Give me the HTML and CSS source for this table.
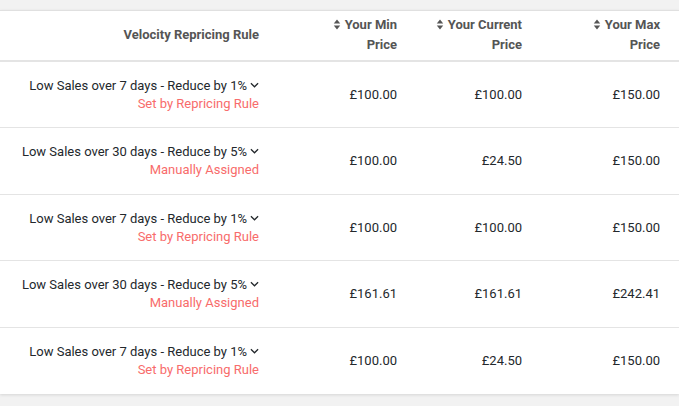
FILE: index.html
```html
<!DOCTYPE html>
<html>
<head>
<meta charset="utf-8">
<link rel="stylesheet" href="styles.css">
</head>
<body>
<div class="page">
  <div class="card">
    <table class="grid">
      <colgroup>
        <col class="c-rule"><col class="c-min"><col class="c-cur"><col class="c-max">
      </colgroup>
      <thead>
        <tr>
          <th>Velocity Repricing Rule</th>
          <th><span class="sort"><svg viewBox="0 0 8 12" width="8" height="11"><path d="M4 0.5 L7.5 5 H0.5 Z M4 11.5 L7.5 7 H0.5 Z" fill="#555"/></svg></span>Your Min<br>Price</th>
          <th><span class="sort"><svg viewBox="0 0 8 12" width="8" height="11"><path d="M4 0.5 L7.5 5 H0.5 Z M4 11.5 L7.5 7 H0.5 Z" fill="#555"/></svg></span>Your Current<br>Price</th>
          <th><span class="sort"><svg viewBox="0 0 8 12" width="8" height="11"><path d="M4 0.5 L7.5 5 H0.5 Z M4 11.5 L7.5 7 H0.5 Z" fill="#555"/></svg></span>Your Max<br>Price</th>
        </tr>
      </thead>
      <tbody>
        <tr>
          <td><div class="rule">Low Sales over 7 days - Reduce by 1%<svg class="chev" viewBox="0 0 10 6" width="9" height="6"><path d="M1 1 L5 5 L9 1" fill="none" stroke="#23282c" stroke-width="1.4"/></svg></div><div class="src">Set by Repricing Rule</div></td>
          <td>£100.00</td><td>£100.00</td><td>£150.00</td>
        </tr>
        <tr>
          <td><div class="rule">Low Sales over 30 days - Reduce by 5%<svg class="chev" viewBox="0 0 10 6" width="9" height="6"><path d="M1 1 L5 5 L9 1" fill="none" stroke="#23282c" stroke-width="1.4"/></svg></div><div class="src">Manually Assigned</div></td>
          <td>£100.00</td><td>£24.50</td><td>£150.00</td>
        </tr>
        <tr>
          <td><div class="rule">Low Sales over 7 days - Reduce by 1%<svg class="chev" viewBox="0 0 10 6" width="9" height="6"><path d="M1 1 L5 5 L9 1" fill="none" stroke="#23282c" stroke-width="1.4"/></svg></div><div class="src">Set by Repricing Rule</div></td>
          <td>£100.00</td><td>£100.00</td><td>£150.00</td>
        </tr>
        <tr>
          <td><div class="rule">Low Sales over 30 days - Reduce by 5%<svg class="chev" viewBox="0 0 10 6" width="9" height="6"><path d="M1 1 L5 5 L9 1" fill="none" stroke="#23282c" stroke-width="1.4"/></svg></div><div class="src">Manually Assigned</div></td>
          <td>£161.61</td><td>£161.61</td><td>£242.41</td>
        </tr>
        <tr>
          <td><div class="rule">Low Sales over 7 days - Reduce by 1%<svg class="chev" viewBox="0 0 10 6" width="9" height="6"><path d="M1 1 L5 5 L9 1" fill="none" stroke="#23282c" stroke-width="1.4"/></svg></div><div class="src">Set by Repricing Rule</div></td>
          <td>£100.00</td><td>£24.50</td><td>£150.00</td>
        </tr>
      </tbody>
    </table>
  </div>
</div>
</body>
</html>
```

FILE: styles.css
```css
html, body {
  margin: 0;
  padding: 0;
  background: #f2f2f2;
  font-family: Roboto, "Liberation Sans", sans-serif;
}
.page {
  padding-top: 10px;
  width: 679px;
  height: 406px;
  box-sizing: border-box;
  overflow: hidden;
}
.card {
  background: #fff;
  border-top: 1px solid #e0e0e0;
  box-shadow: 0 1px 3px rgba(0,0,0,0.12);
}
.grid {
  width: 679px;
  border-collapse: collapse;
  table-layout: fixed;
}
.c-rule { width: 271px; }
.c-min { width: 138px; }
.c-cur { width: 125px; }
.c-max { width: 145px; }
.grid th {
  height: 50px;
  box-sizing: border-box;
  text-align: right;
  font-size: 13px;
  font-weight: 700;
  color: #555;
  line-height: 20px;
  padding: 3px 12px 5px 0;
  vertical-align: middle;
  border-bottom: 2px solid #e4e4e4;
}
.grid th:last-child, .grid td:last-child { padding-right: 19px; }
.sort {
  display: inline-block;
  margin-right: 4px;
  vertical-align: -1px;
}
.sort svg { display: block; }
.grid td {
  height: 66.5px;
  box-sizing: border-box;
  text-align: right;
  font-size: 13px;
  color: #23282c;
  padding: 0 12px 0 0;
  vertical-align: middle;
  border-top: 1px solid #e4e4e4;
}
.grid tbody tr:first-child td { border-top: none; }
.rule {
  line-height: 18px;
  padding-top: 1px;
}
.chev {
  margin-left: 3px;
  vertical-align: 2px;
}
.src {
  line-height: 18px;
  color: #f86c6b;
}
```
